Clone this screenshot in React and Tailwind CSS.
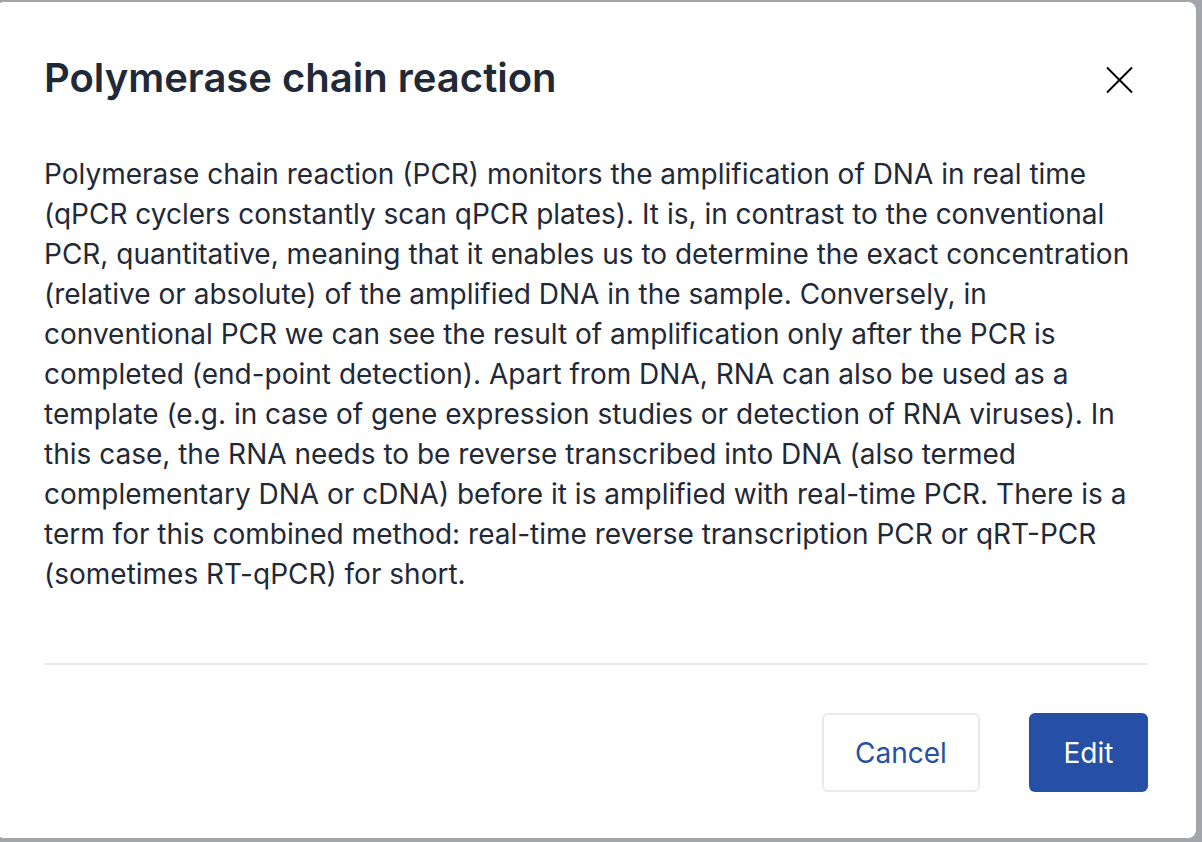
const BODY =
  'Polymerase chain reaction (PCR) monitors the amplification of DNA in real time (qPCR cyclers constantly scan qPCR plates). It is, in contrast to the conventional PCR, quantitative, meaning that it enables us to determine the exact concentration (relative or absolute) of the amplified DNA in the sample. Conversely, in conventional PCR we can see the result of amplification only after the PCR is completed (end-point detection). Apart from DNA, RNA can also be used as a template (e.g. in case of gene expression studies or detection of RNA viruses). In this case, the RNA needs to be reverse transcribed into DNA (also termed complementary DNA or cDNA) before it is amplified with real-time PCR. There is a term for this combined method: real-time reverse transcription PCR or qRT-PCR (sometimes RT-qPCR) for short.';

export default function App() {
  return (
    <div className="h-[842px] w-[1202px] overflow-hidden bg-[#a2a5aa] pt-[2px] font-['Inter',sans-serif]">
      {/* Modal */}
      <div className="-ml-[4px] w-[1200px] h-[836px] bg-white rounded-lg flex flex-col pl-[48px] pr-[48px] pt-[52px] pb-[46px]">
        <div className="flex items-start justify-between">
          <h1 className="text-[40px] leading-[48px] font-semibold text-[#1f2937]">Polymerase chain reaction</h1>
          <button className="mt-[13px] mr-[15px] text-black">
            <svg width="27" height="26" viewBox="0 0 27 26" fill="none" stroke="currentColor" strokeWidth="2">
              <path d="M1 0.5L26 25.5M26 0.5L1 25.5" />
            </svg>
          </button>
        </div>

        <p className="mt-[52px] text-[28px] leading-[40px] text-[#1f2937]">{BODY}</p>

        <div className="flex-1" />
        <div className="h-[2px] bg-[#e9e9ef]" />

        <div className="mt-[48px] flex justify-end gap-[49px]">
          <button className="w-[158px] h-[79px] rounded-md border-2 border-[#e9e9f0] text-[28px] text-[#2550a5]">Cancel</button>
          <button className="w-[119px] h-[79px] rounded-md bg-[#2550a5] text-[28px] text-white">Edit</button>
        </div>
      </div>
    </div>
  );
}
